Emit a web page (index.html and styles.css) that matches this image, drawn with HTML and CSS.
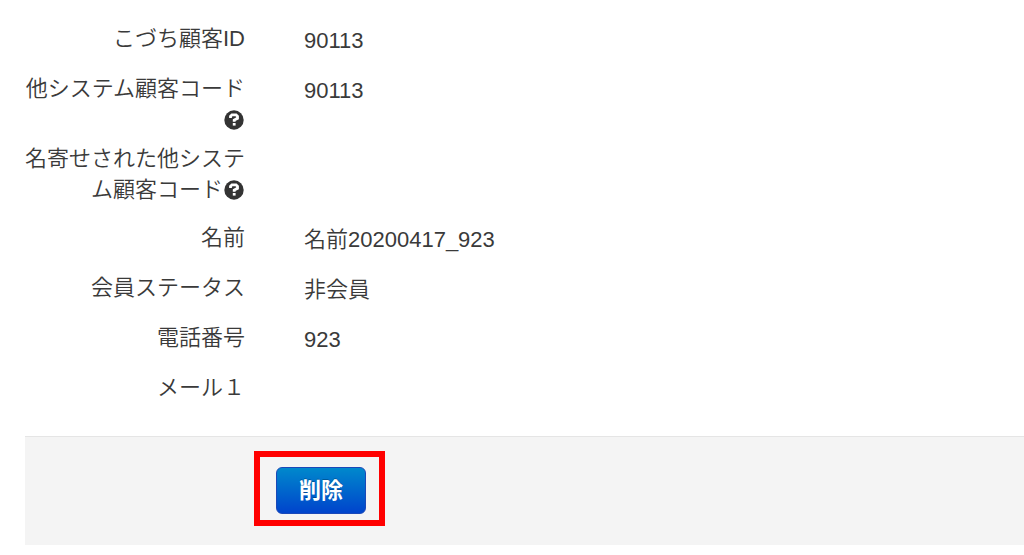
FILE: index.html
```html
<!DOCTYPE html>
<html lang="ja">
<head>
  <meta charset="UTF-8">
  <meta name="viewport" content="width=device-width, initial-scale=1.0">
  <title>顧客削除</title>
  <link rel="stylesheet" href="styles.css">
</head>
<body>

<form class="customer-form">
  <dl class="fields">
    <div class="row">
      <dt class="name">こづち顧客ID</dt>
      <dd class="value">90113</dd>
    </div>
    <div class="row">
      <dt class="name">他システム顧客コード<svg class="help" viewBox="0 0 20 20"><circle cx="10" cy="10" r="9.7"/><path d="M6.500 8V6.300l1.500-1.500h4l1.500 1.500v2L10.200 10v1.800"/><path d="M10.200 13v2.600"/></svg></dt>
      <dd class="value">90113</dd>
    </div>
    <div class="row merged">
      <dt class="name">名寄せされた他システム顧客コード<svg class="help" viewBox="0 0 20 20"><circle cx="10" cy="10" r="9.7"/><path d="M6.500 8V6.300l1.500-1.500h4l1.500 1.500v2L10.200 10v1.800"/><path d="M10.200 13v2.600"/></svg></dt>
      <dd class="value"></dd>
    </div>
    <div class="row">
      <dt class="name">名前</dt>
      <dd class="value">名前20200417_923</dd>
    </div>
    <div class="row">
      <dt class="name">会員ステータス</dt>
      <dd class="value">非会員</dd>
    </div>
    <div class="row">
      <dt class="name">電話番号</dt>
      <dd class="value">923</dd>
    </div>
    <div class="row">
      <dt class="name">メール１</dt>
      <dd class="value"></dd>
    </div>
  </dl>
  <div class="form-actions">
    <div class="highlight">
      <button type="button" class="btn-primary">削除</button>
    </div>
  </div>
</form>

</body>
</html>
```
FILE: styles.css
```css
body {
  margin: 0;
  background-color: #fff;
  color: #3a3a3a;
  font-family: "Liberation Sans", "Noto Sans CJK JP", sans-serif;
  font-size: 22px;
  font-weight: 350;
  line-height: 31px;
}

.customer-form {
  padding: 15px 0 10px;
}

.fields {
  margin: 0 0 22px;
  padding-left: 24px;
}

.row {
  display: flex;
  gap: 59px;
  min-height: 50px;
}

.merged {
  padding-bottom: 9px;
}

.name {
  width: 221px;
  padding-top: 8px;
  text-align: right;
  word-break: break-all;
  line-break: anywhere;
}

.value {
  flex: 1;
  margin: 0;
  padding-top: 10px;
}

.help {
  width: 20px;
  height: 20px;
  margin: 0 1px;
  vertical-align: -3px;
  fill: #333;
}

.help path {
  fill: none;
  stroke: #fff;
  stroke-width: 2.8;
}

.form-actions {
  display: flex;
  margin-left: 25px;
  padding: 14px 0 19px 229px;
  border-top: 1px solid #e5e5e5;
  background-color: #f4f4f4;
}

.highlight {
  display: flex;
  padding: 10px 13px 6px 16px;
  border: 6px solid #f00;
}

.btn-primary {
  padding: 7px 22px;
  border: 1px solid #1a48b8;
  border-radius: 6px;
  background: linear-gradient(#0088cc, #0044cc);
  color: #fff;
  font: inherit;
  font-weight: bold;
  text-shadow: 0 -1px 0 rgba(0, 0, 0, 0.25);
  cursor: pointer;
}
```
